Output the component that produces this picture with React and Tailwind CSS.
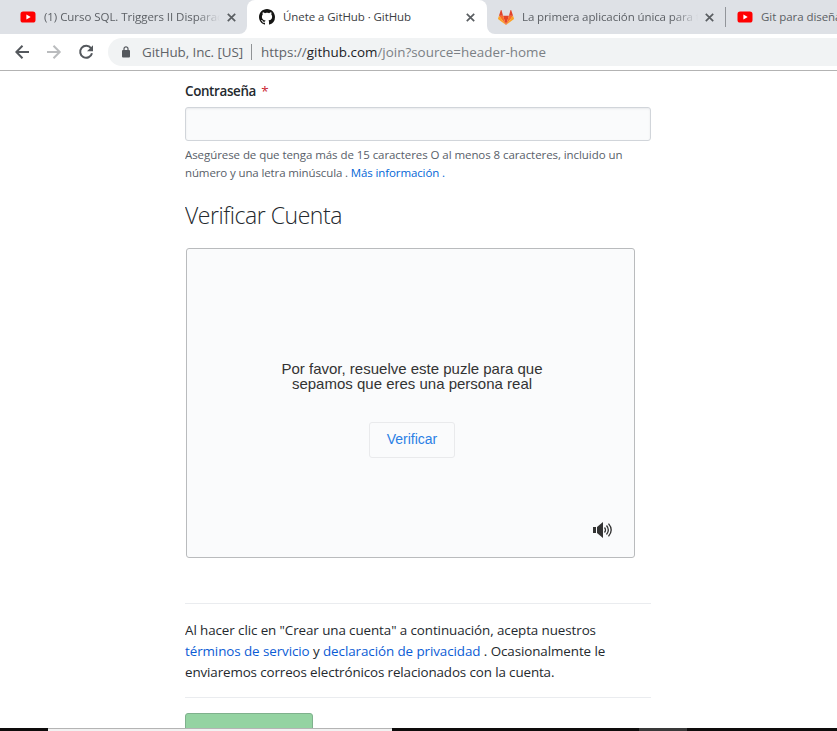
import React from "react";

const ui = "font-['Open_Sans','Noto_Sans',sans-serif]";

function YouTube() {
  return (
    <svg width="16" height="12" viewBox="0 0 16 12" className="shrink-0">
      <rect x="0.5" y="0.5" width="15" height="11" rx="2.6" fill="#ff0000" />
      <path d="M6.4 3.5v5L10.7 6z" fill="#fff" />
    </svg>
  );
}

function GitHub() {
  return (
    <svg width="16" height="16" viewBox="0 0 16 16" className="shrink-0" fill="#161614">
      <path d="M8 0C3.58 0 0 3.58 0 8c0 3.54 2.29 6.53 5.47 7.59.4.07.55-.17.55-.38 0-.19-.01-.82-.01-1.49-2.01.37-2.53-.49-2.69-.94-.09-.23-.48-.94-.82-1.13-.28-.15-.68-.52-.01-.53.63-.01 1.08.58 1.23.82.72 1.21 1.87.87 2.33.66.07-.52.28-.87.51-1.07-1.78-.2-3.64-.89-3.64-3.95 0-.87.31-1.59.82-2.15-.08-.2-.36-1.02.08-2.12 0 0 .67-.21 2.2.82.64-.18 1.32-.27 2-.27s1.36.09 2 .27c1.53-1.04 2.2-.82 2.2-.82.44 1.1.16 1.92.08 2.12.51.56.82 1.27.82 2.15 0 3.07-1.87 3.75-3.65 3.95.29.25.54.73.54 1.48 0 1.07-.01 1.93-.01 2.2 0 .21.15.46.55.38A8.01 8.01 0 0 0 16 8c0-4.42-3.58-8-8-8z" />
    </svg>
  );
}

function GitLab() {
  return (
    <svg width="16" height="15" viewBox="0 0 16 15" className="shrink-0">
      <path d="M8 15 10.95 5.8H5.05z" fill="#e24329" />
      <path d="M8 15 5.05 5.8H.95zM8 15l2.95-9.2h4.1z" fill="#fc6d26" />
      <path d="M.95 5.8.05 8.6c-.1.25 0 .53.22.68L8 15zM15.05 5.8l.9 2.8c.1.25 0 .53-.22.68L8 15z" fill="#fca326" />
      <path d="M.95 5.8h4.1L3.6.4c-.1-.4-.8-.4-.9 0zM15.05 5.8h-4.1L12.4.4c.1-.4.8-.4.9 0z" fill="#e24329" />
    </svg>
  );
}

function Close() {
  return (
    <svg width="9" height="9" viewBox="0 0 9 9" className="shrink-0" stroke="#5a5e62" strokeWidth="1.7">
      <path d="M.8.8l7.4 7.4M8.2.8.8 8.2" />
    </svg>
  );
}

function Tabs() {
  return (
    <div className="flex h-[34px] overflow-hidden bg-white text-[11.5px] leading-[34px] whitespace-nowrap text-[#5b5f64]">
      <div className="flex w-[247px] items-center rounded-br-lg bg-[#dee1e6] pl-5">
        <YouTube />
        <span className="ml-2 w-[176px] overflow-hidden tracking-[-0.05px] [mask-image:linear-gradient(to_right,black_152px,transparent_176px)]">
          (1) Curso SQL. Triggers II Disparad
        </span>
        <span className="ml-[7px]"><Close /></span>
      </div>
      <div className="w-60 bg-[#dee1e6]">
        <div className="flex h-[34px] items-center rounded-t-lg bg-white pl-3 text-[#3c4043]">
          <GitHub />
          <span className="ml-2 w-[183px] tracking-[-0.07px]">Únete a GitHub · GitHub</span>
          <Close />
        </div>
      </div>
      <div className="flex flex-1 items-center rounded-bl-lg bg-[#dee1e6] pl-[11px]">
        <GitLab />
        <span className="ml-2 w-[176px] shrink-0 overflow-hidden tracking-[-0.1px] [mask-image:linear-gradient(to_right,black_150px,transparent_176px)]">
          La primera aplicación única para t
        </span>
        <span className="ml-[7px]"><Close /></span>
        <span className="ml-[11px] h-5 w-px shrink-0 bg-[#92959a]" />
        <span className="ml-[11px]"><YouTube /></span>
        <span className="ml-2 w-[76px] shrink-0 overflow-hidden tracking-[-0.05px]">Git para diseña</span>
      </div>
    </div>
  );
}

function Toolbar() {
  return (
    <div className="flex h-[37px] items-center border-b border-[#b3b3b3] pl-[15px]">
      <svg width="80" height="16" viewBox="0 0 80 16" fill="none" strokeWidth="2" className="shrink-0">
        <path d="M14 8H1.5M7.5 1.8 1.3 8l6.2 6.2" stroke="#54585d" />
        <path d="M32 8h12.5M38.5 1.8 44.7 8l-6.2 6.2" stroke="#babcbe" />
        <path d="M76 4.2A6 6 0 1 0 77 9.3" stroke="#54585d" />
        <path d="M78 1.2v6h-6z" fill="#54585d" />
      </svg>
      <div className="ml-[13px] flex h-7 flex-1 items-center overflow-hidden rounded-l-full bg-[#f1f3f4] pl-[14px] text-[13.4px] whitespace-nowrap text-[#5f6368]">
        <svg width="8" height="12" viewBox="0 0 8 12" className="shrink-0">
          <rect y="4" width="8" height="7.5" rx="1" fill="#54585d" />
          <path d="M2 4.5V2.8a2 2 0 0 1 4 0v1.7" fill="none" stroke="#54585d" strokeWidth="1.2" />
        </svg>
        <span className="ml-[12px] w-[109px] shrink-0 tracking-[-0.08px]">GitHub, Inc. [US]</span>
        <span className="h-4 w-px shrink-0 bg-[#909396]" />
        <span className="ml-[9px] tracking-[0.015px] text-[#7b8085]">
          <span className="text-[#5f6368]">https://</span>
          <span className="text-[#202124]">github.com</span>/join?source=header-home
        </span>
      </div>
    </div>
  );
}

function Speaker() {
  return (
    <svg width="20" height="16" viewBox="0 0 20 16" fill="none" stroke="#333" strokeWidth="1.3">
      <path d="M0 5h3v6H0zM4 5l6-5v16l-6-5z" fill="#333" stroke="none" />
      <path d="M11.5 5.5q2 2.5 0 5M13.5 3.5q3.7 4.5 0 9M15.5 1.7q5.4 6.3 0 12.6" />
    </svg>
  );
}

export default function App() {
  return (
    <div className={"flex h-[731px] w-[837px] flex-col overflow-hidden bg-white text-[#24292e] " + ui}>
      <Tabs />
      <Toolbar />
      <main className="ml-[185px] flex h-[657px] w-[466px] shrink-0 flex-col overflow-hidden">
        <label className="mt-[10px] h-[21px] shrink-0 text-[13.4px] leading-[21px] font-semibold tracking-[-0.35px]">
          Contraseña <span className="ml-0.5 font-normal text-[#cb2431]">*</span>
        </label>
        <input className="mt-[5px] h-[34px] w-full shrink-0 rounded-[3px] border border-[#d1d5da] bg-[#fafbfc] shadow-[inset_0_1px_2px_rgba(27,31,35,0.075)]" />
        <div className="mt-[5px] shrink-0 text-[11.5px] leading-[18px] whitespace-nowrap text-[#586069]">
          <p className="tracking-[-0.07px]">Asegúrese de que tenga más de 15 caracteres O al menos 8 caracteres, incluido un</p>
          <p className="tracking-[-0.12px]">número y una letra minúscula . <a className="text-[#0366d6]">Más información .</a></p>
        </div>
        <h2 className="mt-[15px] h-9 shrink-0 text-[23px] leading-9 font-light tracking-[-0.45px]">Verificar Cuenta</h2>
        <section className="mt-[15px] ml-px flex h-[310px] w-[449px] shrink-0 flex-col items-center rounded-[3px] border border-[#b9bbbd] bg-[#fafbfc] font-['Liberation_Sans',Arial,sans-serif]">
          <p className="mt-[112px] mr-[-3px] text-center text-[15px] leading-[15px] whitespace-nowrap text-[#333]">
            Por favor, resuelve este puzle para que<br />sepamos que eres una persona real
          </p>
          <button className="mt-[31px] ml-[3px] h-9 w-[86px] rounded-[3px] border border-[#e9eaec] pb-0.5 text-[14px] text-[#2b80e5]">Verificar</button>
          <div className="mt-16 mr-[21px] self-end"><Speaker /></div>
        </section>
        <hr className="mt-[45px] shrink-0 border-[#eaecef]" />
        <div className="mt-4 shrink-0 text-[13.4px] leading-[21px] whitespace-nowrap">
          <p className="tracking-[-0.09px]">Al hacer clic en "Crear una cuenta" a continuación, acepta nuestros</p>
          <p className="tracking-[-0.08px]"><a className="text-[#0b5cd5]">términos de servicio</a> y <a className="text-[#0b5cd5]">declaración de privacidad</a> . Ocasionalmente le</p>
          <p className="tracking-[-0.12px]">enviaremos correos electrónicos relacionados con la cuenta.</p>
        </div>
        <hr className="mt-[14px] shrink-0 border-[#eaecef]" />
        <button className="mt-[15px] h-[34px] w-32 shrink-0 rounded-[3px] border border-[#7fb18d] bg-[#94d3a2]" />
      </main>
      <footer className="flex h-[3px] shrink-0 bg-[#0e0c0c]">
        <div className="ml-12 w-[344px] border-t border-[#b4b4b4] bg-[#f2f2f2]" />
        <div className="ml-[247px] w-[48px] bg-[#393939]" />
      </footer>
    </div>
  );
}
